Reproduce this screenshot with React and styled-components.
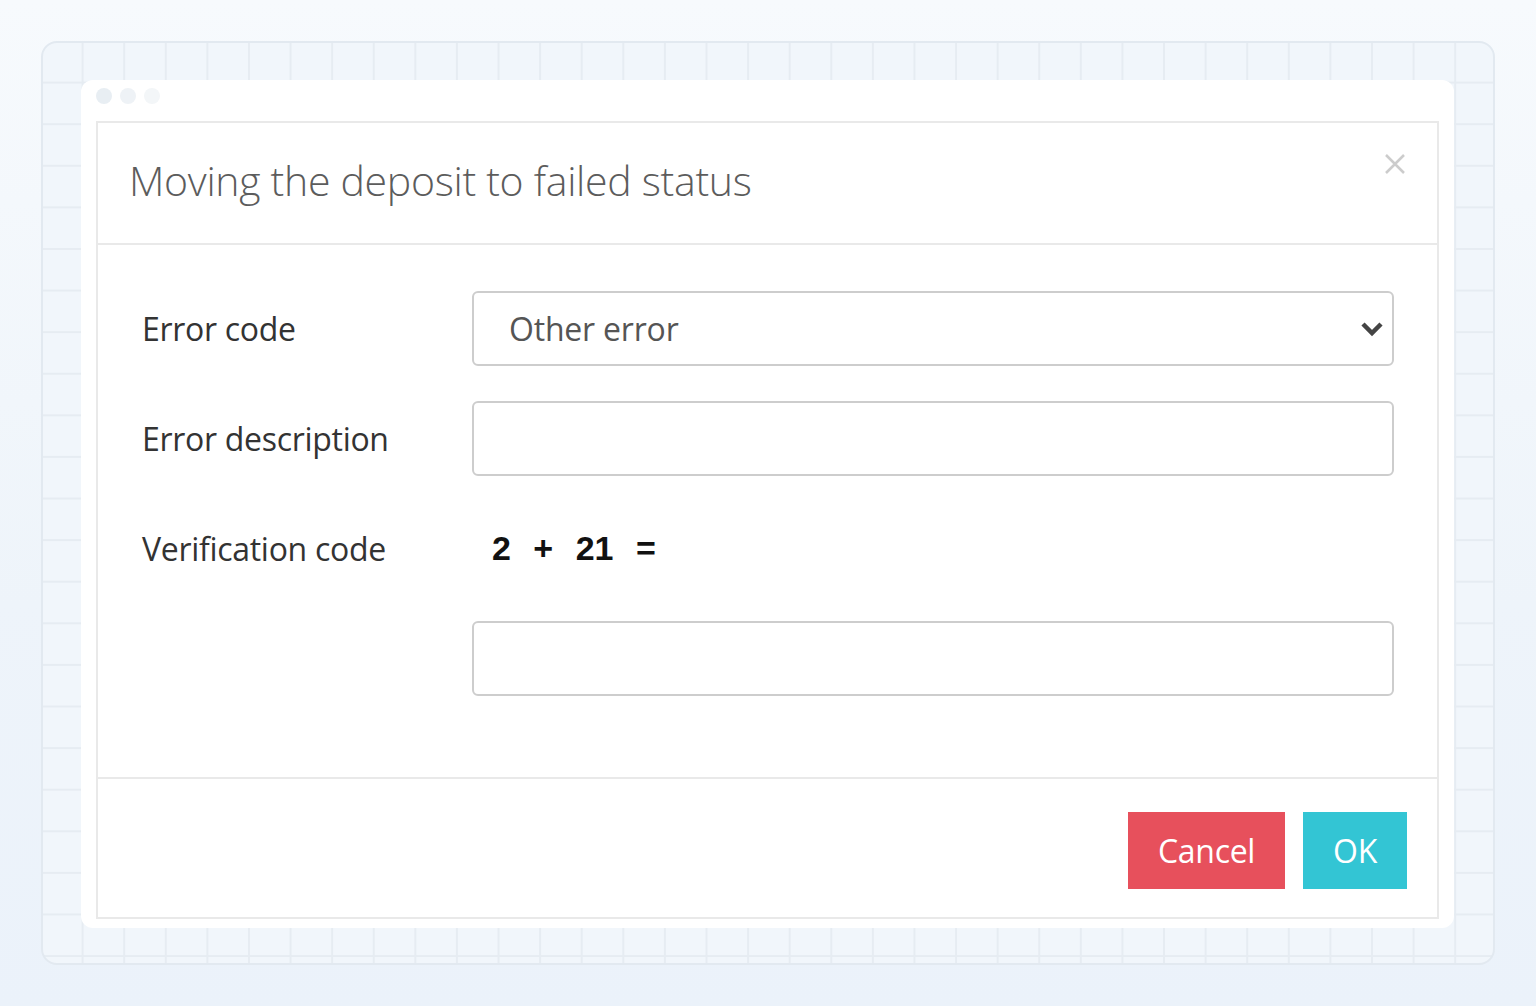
import React from "react";
import styled, { createGlobalStyle } from "styled-components";

const GlobalStyle = createGlobalStyle`
  html, body {
    margin: 0;
    padding: 0;
  }
  body {
    font-family: "Open Sans", "Liberation Sans", sans-serif;
    background: #f3f7fb;
  }
`;

const Page = styled.div`
  width: 1536px;
  height: 1006px;
  box-sizing: border-box;
  padding: 41px;
  background: linear-gradient(180deg, #f7fafd 0%, #eef4fa 60%, #ebf2fa 100%);
`;

const Frame = styled.div`
  height: 924px;
  box-sizing: border-box;
  border: 2px solid #e2e9f0;
  border-radius: 16px;
  padding: 37px 39px 35px 38px;
  background-color: #f1f6fb;
  background-image: linear-gradient(#e6ecf2 1.5px, transparent 1.5px),
    linear-gradient(90deg, #e6ecf2 1.5px, transparent 1.5px);
  background-size: 41.6px 41.6px;
  background-position: -3px -3px;
`;

const Window = styled.div`
  height: 848px;
  box-sizing: border-box;
  background: #ffffff;
  border-radius: 12px;
  padding: 0 15px 9px 15px;
  display: flex;
  flex-direction: column;
`;

const TopBar = styled.div`
  height: 41px;
  box-sizing: border-box;
  display: flex;
  align-items: flex-start;
  gap: 8px;
  padding: 8px 0 0 0;
`;

const Dot = styled.span`
  width: 16px;
  height: 16px;
  border-radius: 50%;
  background: ${(p) => p.color};
`;

const Modal = styled.div`
  flex: 1;
  border: 2px solid #e9e9e9;
  display: flex;
  flex-direction: column;
`;

const Header = styled.div`
  height: 120px;
  border-bottom: 2px solid #e9e9e9;
  display: flex;
  align-items: center;
  justify-content: space-between;
  padding: 0 30px 0 31px;
`;

const Title = styled.h4`
  margin: 0 0 6px 0;
  font-family: "Open Sans", "Liberation Sans", sans-serif;
  font-weight: 300;
  font-size: 41px;
  letter-spacing: -0.3px;
  color: #5c5c5c;
`;

const Close = styled.button`
  align-self: flex-start;
  margin-top: 29px;
  width: 24px;
  height: 24px;
  padding: 0;
  border: none;
  background: none;
  cursor: pointer;
`;

const Body = styled.div`
  flex: 1;
  padding: 46px 43px 0 44px;
  display: grid;
  grid-template-columns: 330px 1fr;
  grid-auto-rows: 75px;
  row-gap: 35px;
  align-content: start;
  border-bottom: 2px solid #e9e9e9;
`;

const Label = styled.label`
  align-self: center;
  font-size: 32px;
  color: #333;
  letter-spacing: -0.3px;
`;

const Field = styled.div`
  position: relative;
  box-sizing: border-box;
  height: 75px;
  border: 2px solid #cdcdcd;
  border-radius: 6px;
  display: flex;
  align-items: center;
  padding: 0 35px;
  font-size: 32px;
  color: #555;
  letter-spacing: -0.2px;
`;

const Chevron = styled.svg`
  position: absolute;
  right: 8px;
  top: 50%;
  transform: translateY(-50%);
`;

const Equation = styled.div`
  align-self: center;
  padding-left: 20px;
  font-family: "Liberation Sans", Arial, sans-serif;
  font-weight: 700;
  font-size: 34px;
  word-spacing: 13px;
  color: #111;
`;

const Footer = styled.div`
  height: 138px;
  box-sizing: border-box;
  display: flex;
  justify-content: flex-end;
  align-items: flex-start;
  gap: 18px;
  padding: 33px 30px 0 0;
`;

const Button = styled.button`
  height: 77px;
  padding: 0 ${(p) => p.$pad}px;
  border: none;
  background: ${(p) => p.$bg};
  color: #fff;
  font-family: "Open Sans", "Liberation Sans", sans-serif;
  font-size: 32px;
  letter-spacing: -0.3px;
  cursor: pointer;
`;

export default function App() {
  return (
    <>
      <GlobalStyle />
      <Page>
        <Frame>
          <Window>
            <TopBar>
              <Dot color="#e8eef3" />
              <Dot color="#eef2f6" />
              <Dot color="#f3f6f8" />
            </TopBar>
            <Modal>
              <Header>
                <Title>Moving the deposit to failed status</Title>
                <Close aria-label="Close">
                  <svg width="24" height="24" viewBox="0 0 24 24">
                    <path
                      d="M3 3 L21 21 M21 3 L3 21"
                      stroke="#cccccc"
                      strokeWidth="2.5"
                      fill="none"
                    />
                  </svg>
                </Close>
              </Header>
              <Body>
                <Label>Error code</Label>
                <Field>
                  Other error
                  <Chevron width="24" height="18" viewBox="0 0 24 18">
                    <polyline
                      points="3,4 12,13 21,4"
                      fill="none"
                      stroke="#444"
                      strokeWidth="4.5"
                    />
                  </Chevron>
                </Field>
                <Label>Error description</Label>
                <Field />
                <Label>Verification code</Label>
                <Equation>2 + 21 =</Equation>
                <span />
                <Field />
              </Body>
              <Footer>
                <Button $bg="#e7505c" $pad={30}>
                  Cancel
                </Button>
                <Button $bg="#33c5d4" $pad={30}>
                  OK
                </Button>
              </Footer>
            </Modal>
          </Window>
        </Frame>
      </Page>
    </>
  );
}
